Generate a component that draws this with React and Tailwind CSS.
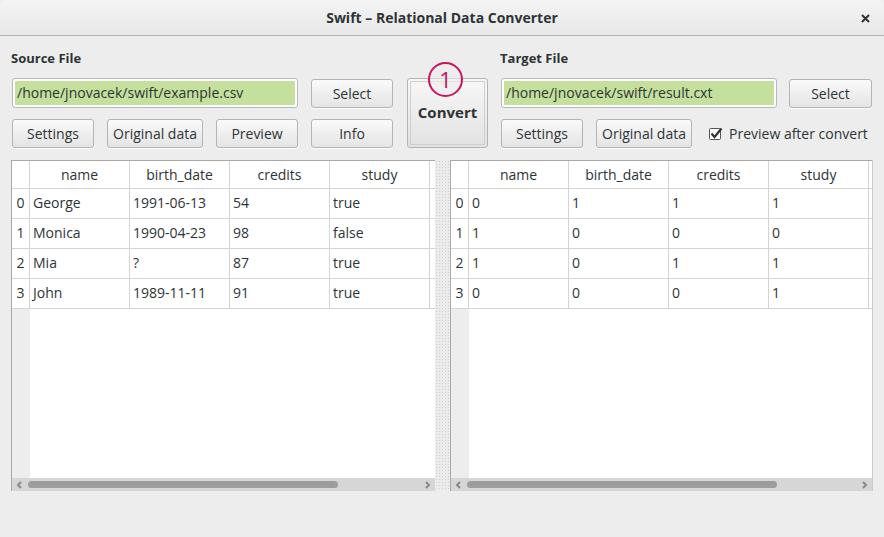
import React from "react";

const FONT = { fontFamily: '"Open Sans", "Noto Sans", sans-serif' };

const cols = ["name", "birth_date", "credits", "study"];

const srcRows = [
  ["George", "1991-06-13", "54", "true"],
  ["Monica", "1990-04-23", "98", "false"],
  ["Mia", "?", "87", "true"],
  ["John", "1989-11-11", "91", "true"],
];

const dstRows = [
  ["0", "1", "1", "1"],
  ["1", "0", "0", "0"],
  ["1", "0", "1", "1"],
  ["0", "0", "0", "1"],
];

const Btn = ({ children, w, className = "" }) => (
  <button
    className={`h-[29px] ${w} shrink-0 rounded-[3px] border border-[#b4b4b4] bg-gradient-to-b from-[#fafafa] to-[#e4e4e4] text-[14px] text-[#2e3436] shadow-[0_1px_0_rgba(255,255,255,0.8)] ${className}`}
  >
    {children}
  </button>
);

const PathInput = ({ value, w }) => (
  <div className={`h-[30px] ${w} shrink-0 rounded-[3px] border border-[#b8b8b8] bg-white p-[2px]`}>
    <div className="h-full rounded-[1px] bg-[#c5e09d] pl-[2px] text-[14px] leading-[24px] text-[#2e3436]">
      {value}
    </div>
  </div>
);

const Chevron = ({ dir }) => (
  <svg width="7" height="8" viewBox="0 0 7 8">
    <path
      d={dir === "l" ? "M5 1 L2 4 L5 7" : "M2 1 L5 4 L2 7"}
      fill="none"
      stroke="#8a8a8a"
      strokeWidth="2"
    />
  </svg>
);

const Table = ({ rows, extra, thumb }) => (
  <div className="flex h-full flex-col border-l border-t border-[#a9a9a9] bg-white">
    <div className="relative flex-1 overflow-hidden">
      <div className="absolute left-0 top-0 bottom-0 w-[18px] bg-[#ededed]" />
      <div className="relative">
        <div className="flex h-[28px] border-b border-[#d4d4d4]">
          <div className="w-[18px] shrink-0 border-r border-[#d4d4d4] bg-white" />
          {cols.map(c => (
            <div key={c} className="w-[100px] shrink-0 border-r border-[#d4d4d4] text-center text-[14px] leading-[27px] text-[#2e3436]">
              {c}
            </div>
          ))}
          {extra && <div className="w-[100px] shrink-0" />}
        </div>
        {rows.map((r, i) => (
          <div key={i} className="flex h-[30px] border-b border-[#d4d4d4]">
            <div className="w-[18px] shrink-0 border-r border-[#d4d4d4] bg-white text-center text-[14px] leading-[28px] text-[#2e3436]">
              {i}
            </div>
            {r.map((v, j) => (
              <div key={j} className="w-[100px] shrink-0 border-r border-[#d4d4d4] pl-[3px] text-[14px] leading-[28px] text-[#2e3436]">
                {v}
              </div>
            ))}
            {extra && <div className="w-[100px] shrink-0" />}
          </div>
        ))}
      </div>
    </div>
    <div className="flex h-[13px] items-center bg-[#d6d6d6] px-[4px]">
      <Chevron dir="l" />
      <div className="ml-[5px] h-[7px] rounded-full bg-[#9d9d9d]" style={{ width: thumb }} />
      <div className="flex-1" />
      <Chevron dir="r" />
    </div>
  </div>
);

export default function App() {
  return (
    <div className="h-[537px] w-[884px] overflow-hidden bg-[#ededed] text-[#2e3436]" style={FONT}>
      {/* title bar */}
      <div className="relative flex h-[36px] items-center justify-center rounded-t-[6px] border-b border-[#b3b3b3] bg-gradient-to-b from-[#f4f4f4] to-[#e8e8e8]">
        <span className="text-[14px] font-bold text-[#2e3436]">Swift – Relational Data Converter</span>
        <svg className="absolute right-[14px] top-[14px]" width="9" height="9" viewBox="0 0 9 9">
          <path d="M1 1 L8 8 M8 1 L1 8" stroke="#2e3436" strokeWidth="2" />
        </svg>
      </div>

      {/* controls */}
      <div className="flex h-[124px] pl-[12px] pt-[13px]">
        <div className="flex w-[381px] flex-col">
          <div className="-ml-[1px] h-[18px] text-[13px] font-bold leading-[18px]">Source File</div>
          <div className="mt-[11px] flex gap-[13px]">
            <PathInput value="/home/jnovacek/swift/example.csv" w="w-[286px]" />
            <Btn w="w-[82px]" className="mt-[1px]">Select</Btn>
          </div>
          <div className="mt-[11px] flex gap-[13px]">
            <Btn w="w-[82px]">Settings</Btn>
            <Btn w="w-[96px]">Original data</Btn>
            <Btn w="w-[82px]">Preview</Btn>
            <Btn w="w-[82px]">Info</Btn>
          </div>
        </div>

        <div className="relative ml-[14px] w-[81px] pt-[29px]">
          <button className="h-[70px] w-[81px] rounded-[3px] border border-[#b4b4b4] bg-gradient-to-b from-[#f7f7f7] to-[#e2e2e2] p-[2px]">
            <div className="flex h-full w-full items-center justify-center border border-[#cfcfcf] pb-[2px] text-[15px] font-bold text-[#2e3436]">
              Convert
            </div>
          </button>
          <div className="absolute left-[21px] top-[13px] flex h-[35px] w-[35px] items-center justify-center rounded-full border-2 border-[#c8145e] bg-[#ededed]/60 pb-[1px] text-[22px] leading-none text-[#c8145e]">
            1
          </div>
        </div>

        <div className="ml-[13px] flex w-[371px] flex-col">
          <div className="-ml-[1px] h-[18px] text-[13px] font-bold leading-[18px]">Target File</div>
          <div className="mt-[11px] flex gap-[12px]">
            <PathInput value="/home/jnovacek/swift/result.cxt" w="w-[276px]" />
            <Btn w="w-[83px]" className="mt-[1px]">Select</Btn>
          </div>
          <div className="mt-[11px] flex items-center">
            <Btn w="w-[82px]">Settings</Btn>
            <Btn w="w-[96px]" className="ml-[13px]">Original data</Btn>
            <div className="ml-[17px] flex items-center gap-[6px]">
              <svg width="14" height="14" viewBox="0 0 14 14">
                <rect x="0.5" y="1.5" width="11" height="11" rx="1" fill="#fff" stroke="#555" />
                <path d="M2.5 6.5 L5.5 10 L12.5 1.5" fill="none" stroke="#2e3436" strokeWidth="2.2" />
              </svg>
              <span className="text-[14px]">Preview after convert</span>
            </div>
          </div>
        </div>
      </div>

      {/* tables */}
      <div className="flex h-[331px] pl-[11px]">
        <div className="w-[424px] overflow-hidden">
          <Table rows={srcRows} extra thumb={310} />
        </div>
        <div className="w-[15px] bg-[radial-gradient(#cfcfcf_1px,#ececec_1px)] bg-[length:3px_3px]" />
        <div className="w-[423px] border-r border-[#c9c9c9]">
          <Table rows={dstRows} extra thumb={310} />
        </div>
      </div>
    </div>
  );
}
